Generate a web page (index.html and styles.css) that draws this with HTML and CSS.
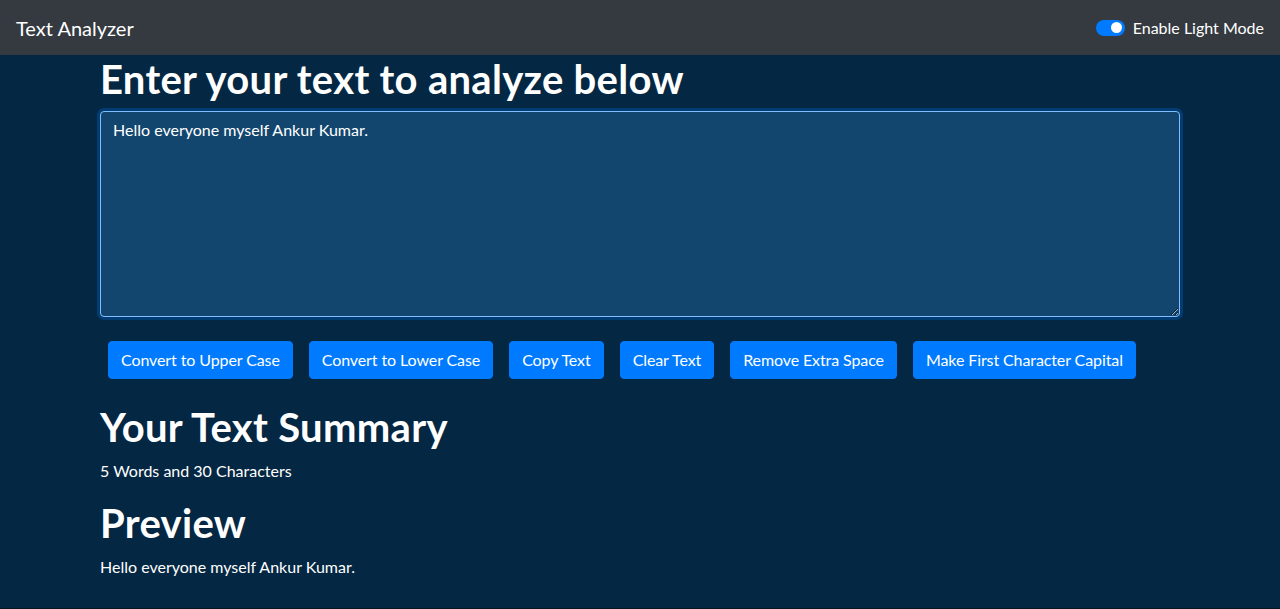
FILE: index.html
```html
<!DOCTYPE html>
<html lang="en">
<head>
<meta charset="utf-8">
<title>Text Analyzer</title>
<link rel="stylesheet" href="styles.css">
</head>
<body>
<nav class="navbar">
  <a class="brand" href="#">Text Analyzer</a>
  <div class="switch">
    <span class="track"><span class="knob"></span></span>
    <label class="switch-label">Enable Light Mode</label>
  </div>
</nav>
<main class="page">
  <section class="editor">
    <h1 class="heading">Enter your text to analyze below</h1>
    <div class="field">
      <textarea class="input" rows="8" spellcheck="false">Hello everyone myself Ankur Kumar.</textarea>
    </div>
    <div class="actions">
      <button class="btn">Convert to Upper Case</button>
      <button class="btn">Convert to Lower Case</button>
      <button class="btn">Copy Text</button>
      <button class="btn">Clear Text</button>
      <button class="btn">Remove Extra Space</button>
      <button class="btn">Make First Character Capital</button>
    </div>
  </section>
  <section class="summary">
    <h1 class="heading">Your Text Summary</h1>
    <p class="text">5 Words and 30 Characters</p>
    <h1 class="heading">Preview</h1>
    <p class="text last">Hello everyone myself Ankur Kumar.</p>
  </section>
</main>
</body>
</html>
```
FILE: styles.css
```css
* { box-sizing: border-box; }
html, body { margin: 0; padding: 0; }
body {
  background: #042743;
  color: #ffffff;
  font-family: Lato, "Open Sans", sans-serif;
  font-size: 16px;
  line-height: 1.5;
  height: 609px;
  overflow: hidden;
  border-bottom: 1px solid #0a1420;
}
.navbar {
  height: 55px;
  background: #343a40;
  display: flex;
  align-items: center;
  justify-content: space-between;
  padding: 0 16px;
}
.brand {
  color: #ffffff;
  text-decoration: none;
  font-size: 20px;
  line-height: 30px;
}
.switch {
  display: flex;
  align-items: center;
  gap: 8px;
}
.track {
  width: 29px;
  height: 16px;
  border-radius: 8px;
  background: #007bff;
  display: flex;
  align-items: center;
  justify-content: flex-end;
  padding-right: 3px;
}
.knob {
  width: 11px;
  height: 11px;
  border-radius: 50%;
  background: #ffffff;
}
.switch-label {
  color: #ffffff;
  font-size: 16px;
  line-height: 24px;
}
.page {
  width: 1080px;
  margin: 0 auto;
}
.heading {
  margin: 0 0 8px;
  font-size: 40px;
  line-height: 48px;
  font-weight: 700;
  letter-spacing: 0.3px;
}
.field { margin-bottom: 16px; }
.input {
  display: block;
  width: 100%;
  height: 206px;
  padding: 6px 12px;
  font-family: inherit;
  font-size: 16px;
  line-height: 24px;
  color: #ffffff;
  background: #13466e;
  border: 1px solid #80bdff;
  border-radius: 4px;
  box-shadow: 0 0 0 3px rgba(0, 123, 255, 0.25);
  outline: none;
  resize: vertical;
}
.actions {
  display: flex;
  flex-wrap: wrap;
  gap: 16px;
  padding: 8px;
}
.btn {
  font-family: inherit;
  font-size: 16px;
  line-height: 24px;
  letter-spacing: -0.1px;
  padding: 6px 12px;
  color: #ffffff;
  background: #007bff;
  border: 1px solid #007bff;
  border-radius: 4px;
}
.summary { margin-top: 16px; }
.text { margin: 0 0 16px; }
.text.last { margin-bottom: 0; }
```
